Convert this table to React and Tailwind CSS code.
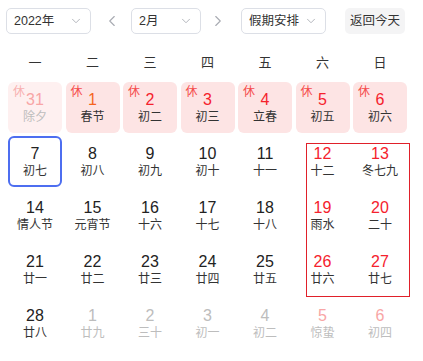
import { ChevronDown, ChevronLeft, ChevronRight } from "lucide-react";

const font = { fontFamily: '"Liberation Sans", "Noto Sans CJK SC", sans-serif' };

// kind: prevhol | hol | today | norm | wkend | next | nextwk
const days = [
    { d: 31, l: "除夕", k: "prevhol" },
    { d: 1, l: "春节", k: "hol", orange: true },
    { d: 2, l: "初二", k: "hol" },
    { d: 3, l: "初三", k: "hol" },
    { d: 4, l: "立春", k: "hol" },
    { d: 5, l: "初五", k: "hol" },
    { d: 6, l: "初六", k: "hol" },
    { d: 7, l: "初七", k: "today" },
    { d: 8, l: "初八", k: "norm" },
    { d: 9, l: "初九", k: "norm" },
    { d: 10, l: "初十", k: "norm" },
    { d: 11, l: "十一", k: "norm" },
    { d: 12, l: "十二", k: "wkend" },
    { d: 13, l: "冬七九", k: "wkend" },
    { d: 14, l: "情人节", k: "norm" },
    { d: 15, l: "元宵节", k: "norm" },
    { d: 16, l: "十六", k: "norm" },
    { d: 17, l: "十七", k: "norm" },
    { d: 18, l: "十八", k: "norm" },
    { d: 19, l: "雨水", k: "wkend" },
    { d: 20, l: "二十", k: "wkend" },
    { d: 21, l: "廿一", k: "norm" },
    { d: 22, l: "廿二", k: "norm" },
    { d: 23, l: "廿三", k: "norm" },
    { d: 24, l: "廿四", k: "norm" },
    { d: 25, l: "廿五", k: "norm" },
    { d: 26, l: "廿六", k: "wkend" },
    { d: 27, l: "廿七", k: "wkend" },
    { d: 28, l: "廿八", k: "norm" },
    { d: 1, l: "廿九", k: "next" },
    { d: 2, l: "三十", k: "next" },
    { d: 3, l: "初一", k: "next" },
    { d: 4, l: "初二", k: "next" },
    { d: 5, l: "惊蛰", k: "nextwk" },
    { d: 6, l: "初四", k: "nextwk" },
];

function Select({ label, width }) {
    return (
        <div className={`shrink-0 h-[26px] ${width} border border-[#dcdfe6] rounded-[5px] flex items-center justify-between pl-[7px] pr-[7px] text-[12.5px] text-[#333] whitespace-nowrap`}>
            <span>{label}</span>
            <ChevronDown size={14} strokeWidth={1.5} className="shrink-0 text-[#a8abb2]" />
        </div>
    );
}

function Cell({ day }) {
    const { d, l, k, orange } = day;
    let box = "";
    let num = "text-[#222]";
    let lunar = "text-[#333]";
    let rest = null;
    if (k === "hol") {
        box = "bg-[#fde4e4] rounded-[6px]";
        num = orange ? "text-[#f5641e]" : "text-[#f5222d]";
        rest = "text-[#f54b4b]";
    } else if (k === "prevhol") {
        box = "bg-[#fef0f0] rounded-[6px]";
        num = "text-[#f8a6a6]";
        lunar = "text-[#bdbdbd]";
        rest = "text-[#f8b0b0]";
    } else if (k === "today") {
        box = "border-2 border-[#4d6ef0] rounded-[6px]";
    } else if (k === "wkend") {
        num = "text-[#f5222d]";
    } else if (k === "next") {
        num = "text-[#bdbdbd]";
        lunar = "text-[#bdbdbd]";
    } else if (k === "nextwk") {
        num = "text-[#f8a6a6]";
        lunar = "text-[#bdbdbd]";
    }
    return (
        <div className={`relative h-[51px] flex flex-col items-center justify-center ${box}`}>
            {rest && <span className={`absolute left-[5px] top-[4px] text-[12px] leading-none ${rest}`}>休</span>}
            <span className={`text-[16px] leading-[18px] mt-[1px] ${num}`}>{d}</span>
            <span className={`text-[12px] leading-[16px] ${lunar}`}>{l}</span>
        </div>
    );
}

export default function App() {
    return (
        <div className="w-[423px] h-[361px] bg-white overflow-hidden" style={font}>
            <div className="flex items-center pt-[8px] pl-[6px]">
                <Select label="2022年" width="w-[85px]" />
                <ChevronLeft size={18} strokeWidth={1.5} className="shrink-0 ml-[12px] text-[#a8abb2]" />
                <div className="shrink-0 ml-[10px]">
                    <Select label="2月" width="w-[70px]" />
                </div>
                <ChevronRight size={18} strokeWidth={1.5} className="shrink-0 ml-[8px] text-[#a8abb2]" />
                <div className="shrink-0 ml-[14px]">
                    <Select label="假期安排" width="w-[85px]" />
                </div>
                <div className="shrink-0 ml-[19px] h-[26px] w-[60px] rounded-[5px] bg-[#f4f4f5] flex items-center justify-center text-[12.5px] text-[#333] whitespace-nowrap">
                    返回今天
                </div>
            </div>

            <div className="ml-[8px] mt-[20px] w-[399px]">
                <div className="grid grid-cols-7 gap-x-[3.5px] text-[13px] text-[#333] h-[18px] leading-[18px]">
                    {["一", "二", "三", "四", "五", "六", "日"].map((w) => (
                        <div key={w} className="text-center">{w}</div>
                    ))}
                </div>
                <div className="relative mt-[10px] grid grid-cols-7 gap-x-[3.5px] gap-y-[3px]">
                    {days.map((day, i) => (
                        <Cell key={i} day={day} />
                    ))}
                    <div className="absolute left-[298px] top-[61px] w-[104px] h-[154px] border border-[#e0202a] pointer-events-none" />
                </div>
            </div>
        </div>
    );
}
